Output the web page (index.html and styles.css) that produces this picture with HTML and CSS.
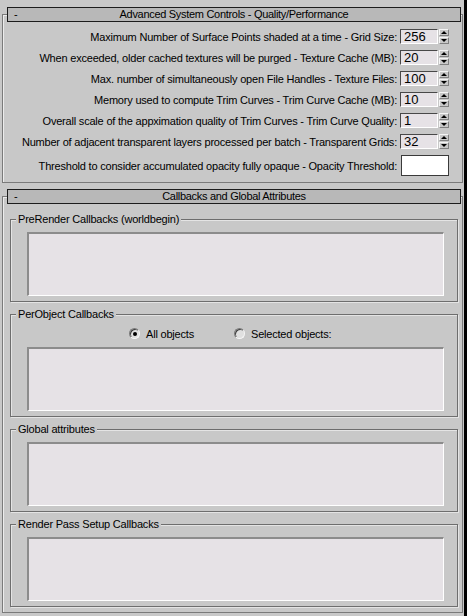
FILE: index.html
```html
<!DOCTYPE html>
<html>
<head>
<meta charset="utf-8">
<link rel="stylesheet" href="styles.css">
</head>
<body>
<div class="screen">
  <div class="panel">
    <section class="rollout rollout-quality">
      <div class="rollout-header"><span class="toggle">-</span><span class="title">Advanced System Controls - Quality/Performance</span><span></span></div>
      <div class="rows">
        <div class="row"><span class="label">Maximum Number of Surface Points shaded at a time - Grid Size:</span><span class="spinner"><span class="edit">256</span><span class="arrows"><span class="arrow up"></span><span class="arrow down"></span></span></span></div>
        <div class="row"><span class="label">When exceeded, older cached textures will be purged - Texture Cache (MB):</span><span class="spinner"><span class="edit">20</span><span class="arrows"><span class="arrow up"></span><span class="arrow down"></span></span></span></div>
        <div class="row"><span class="label">Max. number of simultaneously open File Handles - Texture Files:</span><span class="spinner"><span class="edit">100</span><span class="arrows"><span class="arrow up"></span><span class="arrow down"></span></span></span></div>
        <div class="row"><span class="label">Memory used to compute Trim Curves - Trim Curve Cache (MB):</span><span class="spinner"><span class="edit">10</span><span class="arrows"><span class="arrow up"></span><span class="arrow down"></span></span></span></div>
        <div class="row"><span class="label">Overall scale of the appximation quality of Trim Curves - Trim Curve Quality:</span><span class="spinner"><span class="edit">1</span><span class="arrows"><span class="arrow up"></span><span class="arrow down"></span></span></span></div>
        <div class="row"><span class="label">Number of adjacent transparent layers processed per batch - Transparent Grids:</span><span class="spinner"><span class="edit">32</span><span class="arrows"><span class="arrow up"></span><span class="arrow down"></span></span></span></div>
        <div class="row row-tall"><span class="label label-opacity">Threshold to consider accumulated opacity fully opaque - Opacity Threshold:</span><span class="edit-white"></span></div>
      </div>
    </section>

    <section class="rollout rollout-callbacks">
      <div class="rollout-header"><span class="toggle">-</span><span class="title">Callbacks and Global Attributes</span><span></span></div>
      <div class="group first">
        <div class="group-title">PreRender Callbacks (worldbegin)</div>
        <div class="textbox"></div>
      </div>
      <div class="group">
        <div class="group-title">PerObject Callbacks</div>
        <div class="radios">
          <span class="radio-item"><span class="radio checked"></span>All objects</span>
          <span class="radio-item"><span class="radio"></span>Selected objects:</span>
        </div>
        <div class="textbox textbox-after-radios"></div>
      </div>
      <div class="group">
        <div class="group-title">Global attributes</div>
        <div class="textbox"></div>
      </div>
      <div class="group">
        <div class="group-title">Render Pass Setup Callbacks</div>
        <div class="textbox"></div>
      </div>
    </section>
  </div>
  <div class="scrollbar"></div>
</div>
</body>
</html>
```

FILE: styles.css
```css
html, body {
  margin: 0;
  padding: 0;
  background: #c8c8c8;
}

.screen {
  width: 467px;
  height: 616px;
  overflow: hidden;
  display: flex;
  font-family: "Liberation Sans", Arial, sans-serif;
  font-size: 11px;
  letter-spacing: -0.2px;
  color: #000;
}

.panel {
  width: 464px;
  padding-top: 14px;
}

.scrollbar {
  width: 3px;
  background: #000;
}

.rollout {
  margin-left: 2px;
  width: 461px;
  box-sizing: border-box;
  border: 1px solid #7a7a7a;
  box-shadow: inset 1px 1px 0 #ececec;
  display: flex;
  flex-direction: column;
}

.rollout-callbacks {
  margin-top: 13px;
  padding-bottom: 5px;
}

.rollout-header {
  margin: -8px 1px 0 4px;
  height: 15px;
  box-sizing: border-box;
  border: 1px solid #1c1c1c;
  background: #b8b8b8;
  display: grid;
  grid-template-columns: 1fr auto 1fr;
  align-items: center;
  line-height: 13px;
  letter-spacing: -0.3px;
}

.toggle {
  padding-left: 6px;
}

.rows {
  padding: 7px 13px 6px 0;
  display: flex;
  flex-direction: column;
  gap: 6px;
}

.row {
  display: flex;
  justify-content: flex-end;
  align-items: center;
  height: 15px;
}

.row-tall {
  height: 21px;
}

.label {
  margin-right: 3px;
  white-space: nowrap;
}

.label-opacity {
  margin-right: 4px;
}

.spinner {
  display: flex;
  gap: 1px;
}

.edit {
  width: 38px;
  height: 15px;
  box-sizing: border-box;
  background: #e6e2e6;
  border-top: 1px solid #484848;
  border-left: 1px solid #484848;
  border-right: 1px solid #ffffff;
  border-bottom: 1px solid #ffffff;
  font-size: 13px;
  letter-spacing: 0;
  line-height: 13px;
  padding-left: 3px;
}

.arrows {
  width: 10px;
  display: flex;
  flex-direction: column;
  gap: 1px;
}

.arrow {
  height: 7px;
  box-sizing: border-box;
  background: #c8c8c8;
  border-top: 1px solid #f4f4f4;
  border-left: 1px solid #f4f4f4;
  border-right: 1px solid #808080;
  border-bottom: 1px solid #808080;
  display: flex;
  align-items: center;
  justify-content: center;
}

.arrow::after {
  content: "";
  width: 0;
  height: 0;
  border-left: 3px solid transparent;
  border-right: 3px solid transparent;
}

.arrow.up::after {
  border-bottom: 3px solid #000;
}

.arrow.down::after {
  border-top: 3px solid #000;
}

.edit-white {
  width: 48px;
  height: 21px;
  box-sizing: border-box;
  background: #ffffff;
  border: 1px solid #3a3a3a;
}

.group {
  margin: 12px 4px 0 7px;
  border: 1px solid #6e6e6e;
  box-shadow: 1px 1px 0 #e4e4e4, inset 1px 1px 0 #e4e4e4;
  padding-bottom: 5px;
}

.group.first {
  margin-top: 15px;
}

.group-title {
  margin: -7px 0 0 5px;
  padding: 0 2px;
  width: fit-content;
  line-height: 13px;
  background: #c8c8c8;
}

.textbox {
  margin: 6px 13px 0 16px;
  height: 64px;
  box-sizing: border-box;
  background: #e6e2e6;
  border-top: 2px solid #8c8c8c;
  border-left: 2px solid #8c8c8c;
  border-right: 1px solid #ffffff;
  border-bottom: 1px solid #ffffff;
}

.textbox-after-radios {
  margin-top: 7px;
}

.radios {
  margin-top: 6px;
  padding-left: 118px;
  display: grid;
  grid-template-columns: 105px auto;
  height: 13px;
  align-items: center;
}

.radio-item {
  display: flex;
  align-items: center;
  gap: 6px;
}

.radio {
  width: 11px;
  height: 11px;
  box-sizing: border-box;
  border-radius: 50%;
  background: #e0e0e0;
  border: 1px solid;
  border-color: #7a7a7a #f6f6f6 #f6f6f6 #7a7a7a;
  box-shadow: inset 1px 1px 0 #404040;
  display: flex;
  align-items: center;
  justify-content: center;
}

.radio.checked::after {
  content: "";
  width: 4px;
  height: 4px;
  border-radius: 50%;
  background: #000;
}
```
